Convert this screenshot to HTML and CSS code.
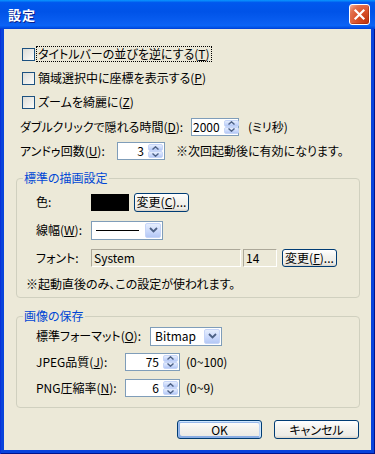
FILE: index.html
```html
<!DOCTYPE html>
<html lang="ja">
<head>
<meta charset="utf-8">
<title>設定</title>
<link rel="stylesheet" href="styles.css">
</head>
<body>
<div class="window">
  <div class="titlebar">
    <span class="title">設定</span>
    <span class="close" aria-label="閉じる">
      <svg width="13" height="13" viewBox="0 0 13 13"><path d="M2.5 2.5 L10.5 10.5 M10.5 2.5 L2.5 10.5" stroke="#fff" stroke-width="2.2" stroke-linecap="square"/></svg>
    </span>
  </div>
  <div class="frame">
    <div class="client">
      <div class="checks">
        <div class="check-row"><span class="checkbox"></span><span class="clabel focus">タイトルバーの並びを逆にする(<u>T</u>)</span></div>
        <div class="check-row"><span class="checkbox"></span><span class="clabel">領域選択中に座標を表示する(<u>P</u>)</span></div>
        <div class="check-row"><span class="checkbox"></span><span class="clabel">ズームを綺麗に(<u>Z</u>)</span></div>
      </div>

      <div class="line line-hide">
        <span class="lbl lbl-hide">ダブルクリックで隠れる時間(<u>D</u>):</span>
        <span class="spin spin-48"><span class="val">2000</span><span class="arrows"><span class="arr"><svg width="7" height="4" viewBox="0 0 7 4"><polyline points="0.5,3.5 3.5,0.8 6.5,3.5" fill="none" stroke="#4d6185" stroke-width="1.4"/></svg></span><span class="arr"><svg width="7" height="4" viewBox="0 0 7 4"><polyline points="0.5,0.5 3.5,3.2 6.5,0.5" fill="none" stroke="#4d6185" stroke-width="1.4"/></svg></span></span></span>
        <span class="note note-ms">(ミリ秒)</span>
      </div>

      <div class="line line-undo">
        <span class="lbl lbl-undo">アンドゥ回数(<u>U</u>):</span>
        <span class="spin spin-48"><span class="val">3</span><span class="arrows"><span class="arr"><svg width="7" height="4" viewBox="0 0 7 4"><polyline points="0.5,3.5 3.5,0.8 6.5,3.5" fill="none" stroke="#4d6185" stroke-width="1.4"/></svg></span><span class="arr"><svg width="7" height="4" viewBox="0 0 7 4"><polyline points="0.5,0.5 3.5,3.2 6.5,0.5" fill="none" stroke="#4d6185" stroke-width="1.4"/></svg></span></span></span>
        <span class="note note-undo">※次回起動後に有効になります。</span>
      </div>

      <fieldset class="group group-draw">
        <legend>標準の描画設定</legend>
        <div class="grow h28">
          <span class="glbl">色:</span>
          <span class="swatch"></span>
          <span class="btn btn-small">変更(<u>C</u>)...</span>
        </div>
        <div class="grow h28">
          <span class="glbl">線幅(<u>W</u>):</span>
          <span class="combo combo-line"><span class="field"><span class="sample-line"></span></span><span class="drop"><svg width="9" height="6" viewBox="0 0 9 6"><polyline points="1,1 4.5,4.5 8,1" fill="none" stroke="#4d6185" stroke-width="1.8"/></svg></span></span>
        </div>
        <div class="grow h28">
          <span class="glbl">フォント:</span>
          <span class="static static-font">System</span>
          <span class="static static-size">14</span>
          <span class="btn btn-small">変更(<u>F</u>)...</span>
        </div>
        <div class="grow h24 note-row">※起動直後のみ、この設定が使われます。</div>
      </fieldset>

      <fieldset class="group group-save">
        <legend>画像の保存</legend>
        <div class="grow h26">
          <span class="glbl glbl-fmt">標準フォーマット(<u>O</u>):</span>
          <span class="combo combo-fmt"><span class="field field-text">Bitmap</span><span class="drop"><svg width="9" height="6" viewBox="0 0 9 6"><polyline points="1,1 4.5,4.5 8,1" fill="none" stroke="#4d6185" stroke-width="1.8"/></svg></span></span>
        </div>
        <div class="grow h25">
          <span class="glbl glbl-q">JPEG品質(<u>J</u>):</span>
          <span class="spin spin-55"><span class="val">75</span><span class="arrows"><span class="arr"><svg width="7" height="4" viewBox="0 0 7 4"><polyline points="0.5,3.5 3.5,0.8 6.5,3.5" fill="none" stroke="#4d6185" stroke-width="1.4"/></svg></span><span class="arr"><svg width="7" height="4" viewBox="0 0 7 4"><polyline points="0.5,0.5 3.5,3.2 6.5,0.5" fill="none" stroke="#4d6185" stroke-width="1.4"/></svg></span></span></span>
          <span class="note note-range">(0~100)</span>
        </div>
        <div class="grow h28">
          <span class="glbl glbl-q">PNG圧縮率(<u>N</u>):</span>
          <span class="spin spin-55"><span class="val">6</span><span class="arrows"><span class="arr"><svg width="7" height="4" viewBox="0 0 7 4"><polyline points="0.5,3.5 3.5,0.8 6.5,3.5" fill="none" stroke="#4d6185" stroke-width="1.4"/></svg></span><span class="arr"><svg width="7" height="4" viewBox="0 0 7 4"><polyline points="0.5,0.5 3.5,3.2 6.5,0.5" fill="none" stroke="#4d6185" stroke-width="1.4"/></svg></span></span></span>
          <span class="note note-range">(0~9)</span>
        </div>
      </fieldset>

      <div class="actions">
        <span class="btn btn-big btn-default">OK</span>
        <span class="btn btn-big">キャンセル</span>
      </div>
    </div>
  </div>
</div>
</body>
</html>
```

FILE: styles.css
```css
* { box-sizing: border-box; }
html, body { margin: 0; padding: 0; }
body {
  width: 375px;
  height: 454px;
  overflow: hidden;
  background: #0831d9;
  font-family: "Noto Sans CJK JP", "Noto Sans", sans-serif;
  font-size: 12px;
  line-height: 14px;
  color: #000;
  font-feature-settings: "palt" 1;
}
u { text-decoration: underline; text-underline-offset: 1px; }

.window {
  width: 375px;
  height: 454px;
  display: flex;
  flex-direction: column;
}

.titlebar {
  flex: none;
  height: 29px;
  display: flex;
  align-items: center;
  justify-content: space-between;
  padding: 0 5px 0 8px;
  background: linear-gradient(180deg, #0997ff 0%, #0058ee 9%, #0053e8 40%, #0a5ff2 80%, #0a63f6 88%, #0255e8 94%, #003dd7 100%);
}
.title {
  color: #fff;
  font-weight: bold;
  font-size: 13px;
  letter-spacing: 1px;
  text-shadow: 1px 1px 0 #0a1d8a;
}
.close {
  width: 21px;
  height: 21px;
  border: 1px solid #fff;
  border-radius: 3px;
  display: flex;
  align-items: center;
  justify-content: center;
  background: radial-gradient(circle at 85% 85%, #c2360f 0%, #d9532c 45%, #e2704d 75%, #f3b49f 100%);
  box-shadow: inset -1px -1px 0 rgba(120, 20, 0, 0.35);
}

.frame {
  flex: 1;
  display: flex;
  padding: 0 4px 4px 4px;
  background: #0843dc;
  box-shadow: inset 1px 0 0 #0831d9, inset -1px -1px 0 #00138c;
}
.client {
  flex: 1;
  background: #ece9d8;
  display: flex;
  flex-direction: column;
  padding-top: 13px;
}

/* checkboxes */
.check-row {
  height: 24px;
  display: flex;
  align-items: center;
  padding-left: 18px;
  white-space: nowrap;
}
.checkbox {
  flex: none;
  width: 13px;
  height: 13px;
  border: 1px solid #1c5180;
  background: linear-gradient(135deg, #dcdcd7 0%, #fbfbf9 100%);
  margin-right: 2px;
}
.clabel { padding: 0 1px; }
.focus { outline: 1px dotted #000; outline-offset: 0; }

/* top lines */
.line {
  display: flex;
  align-items: center;
  padding-left: 16px;
  white-space: nowrap;
}
.line-hide { height: 25px; }
.line-undo { height: 24px; }
.lbl { flex: none; }
.lbl-hide { width: 171px; }
.lbl-undo { width: 97px; }
.note-ms { margin-left: 9px; }
.note-undo { margin-left: 11px; }

/* spin box */
.spin {
  flex: none;
  height: 18px;
  display: flex;
  border: 1px solid #7f9db9;
  background: #fff;
  padding: 1px;
}
.spin-48 { width: 48px; }
.spin-55 { width: 55px; }
.val {
  flex: 1;
  text-align: right;
  padding-right: 4px;
  line-height: 14px;
}
.arrows {
  flex: none;
  width: 15px;
  display: flex;
  flex-direction: column;
}
.arr {
  flex: 1;
  display: flex;
  align-items: center;
  justify-content: center;
  border: 1px solid #c6d5f8;
  border-radius: 2px;
  background: linear-gradient(180deg, #e6eefd 0%, #c9d8fb 60%, #b4c8f5 100%);
}

/* group boxes */
.group {
  margin: 8px 11px 0 12px;
  padding: 3px 0 1px 0;
  border: 1px solid #d0d0bf;
  border-radius: 4px;
  min-width: 0;
}
.group-save {
  margin-top: 11px;
  padding: 0 0 5px 0;
}
.group legend {
  margin-left: 6px;
  padding: 0 1px;
  color: #0046d5;
  line-height: 14px;
}
.grow {
  display: flex;
  align-items: center;
  padding-left: 19px;
  white-space: nowrap;
}
.h24 { height: 24px; }
.h25 { height: 25px; }
.h26 { height: 26px; }
.h28 { height: 28px; }
.glbl { flex: none; width: 55px; }
.glbl-fmt { width: 114px; }
.glbl-q { width: 89px; }
.note-row { padding-left: 9px; }
.note-range { margin-left: 6px; }

.swatch {
  flex: none;
  width: 38px;
  height: 17px;
  background: #000;
}

.btn {
  flex: none;
  display: flex;
  align-items: center;
  justify-content: center;
  border: 1px solid #003c74;
  border-radius: 3px;
  background: linear-gradient(180deg, #ffffff 0%, #f4f3ee 40%, #ecebe6 86%, #d6d0c5 100%);
  white-space: nowrap;
}
.btn-small {
  width: 55px;
  height: 19px;
  margin-left: 5px;
}
.static-font + .static-size + .btn-small { height: 18px; }
.btn-big {
  width: 85px;
  height: 19px;
}
.btn-default {
  box-shadow: inset -1px 1px #cee7ff, inset 1px 2px #98b8ea, inset -2px 2px #bcd4f6, inset 1px -1px #89ade4, inset 2px -2px #89ade4;
}

.combo {
  flex: none;
  height: 19px;
  display: flex;
  border: 1px solid #7f9db9;
  background: #fff;
  padding: 1px;
}
.combo-line { width: 72px; }
.combo-fmt { width: 72px; }
.field {
  flex: 1;
  display: flex;
  align-items: center;
}
.sample-line {
  display: block;
  width: 43px;
  height: 1px;
  margin-left: 3px;
  background: #000;
}
.field-text { padding-left: 3px; }
.drop {
  flex: none;
  width: 16px;
  display: flex;
  align-items: center;
  justify-content: center;
  border: 1px solid #c6d5f8;
  border-radius: 2px;
  background: linear-gradient(180deg, #e6eefd 0%, #c9d8fb 60%, #b4c8f5 100%);
}

.static {
  flex: none;
  height: 18px;
  display: flex;
  align-items: center;
  padding-left: 2px;
  border: 1px solid;
  border-color: #aca899 #fffffd #fffffd #aca899;
  color: #000;
}
.static-font { width: 150px; }
.static-size { width: 34px; margin-left: 2px; }

.actions {
  display: flex;
  justify-content: flex-end;
  gap: 12px;
  padding-right: 12px;
  margin-top: 12px;
}
```
